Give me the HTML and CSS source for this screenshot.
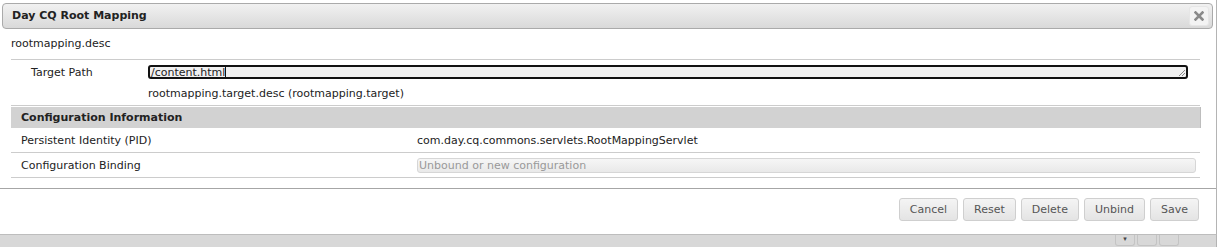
FILE: index.html
```html
<!DOCTYPE html>
<html lang="en">

<head>
  <meta charset="UTF-8">
  <title>Day CQ Root Mapping</title>
  <link rel="stylesheet" href="styles.css">
</head>

<body>
  <div id="dialog">
    <div id="titlebar">
      <span id="title">Day CQ Root Mapping</span>
      <button id="close-button" title="close">
        <svg width="10" height="10" viewBox="0 0 10 10">
          <path d="M1.5 1.5 L8.5 8.5 M8.5 1.5 L1.5 8.5" stroke="#8a8a8a" stroke-width="2.6" stroke-linecap="square"></path>
        </svg>
      </button>
    </div>
    <div id="content">
      <p class="desc">rootmapping.desc</p>
      <div class="props">
        <div class="prop-row">
          <div class="prop-label">Target Path</div>
          <div class="prop-field">
            <div class="text-input">
              <span>/content.html</span><span class="caret"></span>
              <svg class="grip" width="8" height="8" viewBox="0 0 8 8">
                <path d="M7 1 L1 7 M7 4 L4 7" stroke="#888" stroke-width="1"></path>
              </svg>
            </div>
            <p class="field-desc">rootmapping.target.desc (rootmapping.target)</p>
          </div>
        </div>
      </div>
      <div class="info">
        <div class="info-header">Configuration Information</div>
        <div class="info-row">
          <div class="info-label">Persistent Identity (PID)</div>
          <div class="info-value">com.day.cq.commons.servlets.RootMappingServlet</div>
        </div>
        <div class="info-row">
          <div class="info-label">Configuration Binding</div>
          <div class="info-value">
            <div class="binding">Unbound or new configuration</div>
          </div>
        </div>
      </div>
    </div>
    <div id="buttonbar">
      <button class="action">Cancel</button>
      <button class="action">Reset</button>
      <button class="action">Delete</button>
      <button class="action">Unbind</button>
      <button class="action">Save</button>
    </div>
  </div>
  <div id="underlay">
    <span class="ghost-button">&#9662;</span>
    <span class="ghost-button"></span>
    <span class="ghost-button"></span>
  </div>
</body>

</html>
```

FILE: styles.css
```css
:root {
    --text: #222222;
    --line: #cccccc;
    --muted: #999999;
}

html,
body {
    margin: 0;
    padding: 0;
}

body {
    background-color: #ffffff;
    font-family: "DejaVu Sans", Verdana, sans-serif;
    font-size: 11px;
    color: var(--text);
    overflow: hidden;
}

p {
    margin: 0;
}

#dialog {
    width: 1217px;
    height: 234px;
    box-sizing: border-box;
    border-right: 1px solid #b4b4b4;
    padding: 3px 3px 0 2px;
    display: flex;
    flex-direction: column;
}

#titlebar {
    display: flex;
    justify-content: space-between;
    align-items: center;
    height: 26px;
    flex-shrink: 0;
    box-sizing: border-box;
    padding: 0 3px 0 9px;
    border: 1px solid #aaaaaa;
    border-radius: 4px;
    background: linear-gradient(#f1f1f1, #d9d9d9);
}

#title {
    font-weight: bold;
    color: #222222;
    padding-bottom: 2px;
}

#close-button {
    width: 20px;
    height: 20px;
    padding: 0;
    border: 1px solid #e6e6e6;
    border-radius: 3px;
    background-color: #f3f3f3;
    display: flex;
    align-items: center;
    justify-content: center;
}

#content {
    padding: 0 13px 0 9px;
}

.desc {
    padding: 8px 0 9px 0;
    border-bottom: 1px solid var(--line);
}

.props {
    border-bottom: 1px solid var(--line);
}

.prop-row {
    display: grid;
    grid-template-columns: 137px 1fr;
    padding: 5px 12px 5px 0;
}

.prop-label {
    padding-left: 20px;
    padding-top: 1px;
}

.text-input {
    position: relative;
    display: flex;
    align-items: center;
    height: 14px;
    box-sizing: border-box;
    border: 2px solid #111111;
    border-radius: 3px;
    background-color: #f0f0f0;
    padding-left: 1px;
}

.caret {
    display: inline-block;
    width: 1px;
    height: 12px;
    background-color: #111111;
}

.grip {
    position: absolute;
    right: 0;
    bottom: 0;
}

.field-desc {
    padding-top: 8px;
}

.info {
    margin-top: 1px;
}

.info-header {
    font-weight: bold;
    height: 21px;
    box-sizing: border-box;
    padding: 4px 0 0 10px;
    background-color: #d2d2d2;
    border-right: 1px solid #bdbdbd;
    margin-right: -1px;
}

.info-row {
    display: grid;
    grid-template-columns: 396px 1fr;
    align-items: center;
    height: 25px;
    box-sizing: border-box;
    border-bottom: 1px solid var(--line);
    padding-left: 10px;
}

.binding {
    height: 15px;
    box-sizing: border-box;
    margin-right: 4px;
    border: 1px solid #d6d6d6;
    border-radius: 3px;
    background: linear-gradient(#f6f6f6, #e9e9e9);
    color: var(--muted);
    padding-left: 1px;
    line-height: 13px;
}

#buttonbar {
    margin-top: 10px;
    margin-left: -2px;
    margin-right: -3px;
    border-top: 1px solid #a6a6a6;
    display: flex;
    justify-content: flex-end;
    gap: 5px;
    padding: 9px 17px 0 0;
}

.action {
    height: 23px;
    font-family: "DejaVu Sans", Verdana, sans-serif;
    font-size: 11px;
    color: #555555;
    background: linear-gradient(#f4f4f4, #e4e4e4);
    border: 1px solid #cfcfcf;
    border-radius: 3px;
    padding: 0 10px;
}

#underlay {
    height: 13px;
    border-top: 1px solid #bdbdbd;
    border-right: 1px solid #b4b4b4;
    width: 1217px;
    box-sizing: border-box;
    background-color: #d8d8d8;
    display: flex;
    justify-content: flex-end;
    gap: 2px;
    padding-right: 37px;
}

.ghost-button {
    width: 20px;
    height: 11px;
    box-sizing: border-box;
    border: 1px solid #c4c4c4;
    border-top: none;
    border-radius: 0 0 3px 3px;
    font-size: 7px;
    color: #444444;
    text-align: center;
    line-height: 8px;
}
```
